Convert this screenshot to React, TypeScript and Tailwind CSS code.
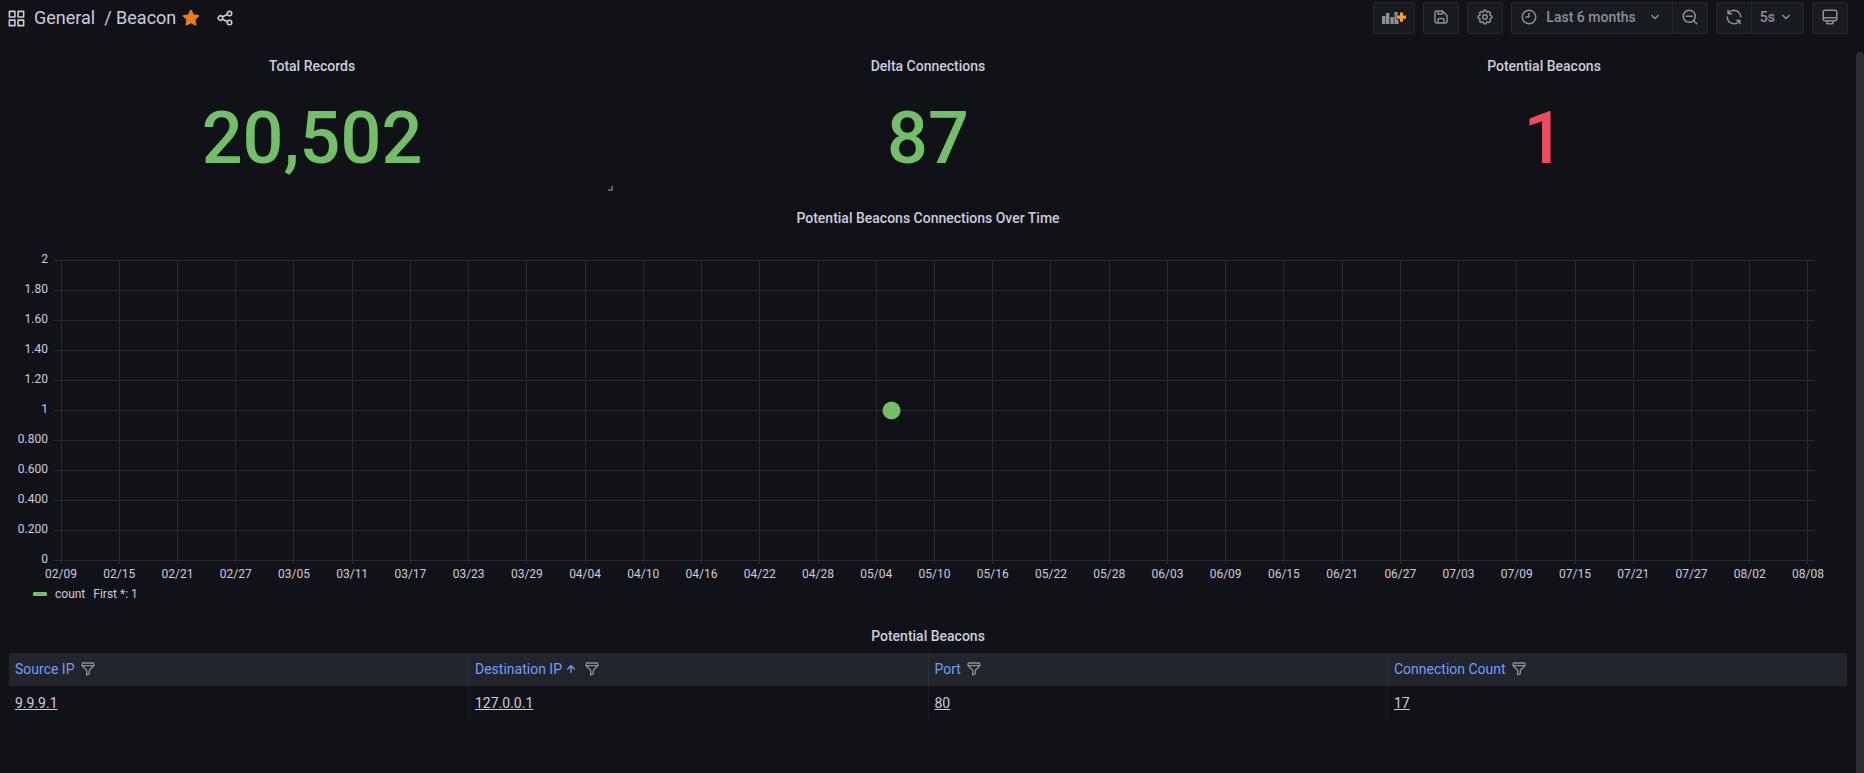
import type { ReactNode } from "react";

const ICONS = {
  apps: "M10,13H3a1,1,0,0,0-1,1v7a1,1,0,0,0,1,1h7a1,1,0,0,0,1-1V14A1,1,0,0,0,10,13ZM9,20H4V15H9ZM21,2H14a1,1,0,0,0-1,1v7a1,1,0,0,0,1,1h7a1,1,0,0,0,1-1V3A1,1,0,0,0,21,2ZM20,9H15V4h5Zm1,4H14a1,1,0,0,0-1,1v7a1,1,0,0,0,1,1h7a1,1,0,0,0,1-1V14A1,1,0,0,0,21,13Zm-1,7H15V15h5ZM10,2H3A1,1,0,0,0,2,3v7a1,1,0,0,0,1,1h7a1,1,0,0,0,1-1V3A1,1,0,0,0,10,2ZM9,9H4V4H9Z",
  star: "M17.56,21a1,1,0,0,1-.46-.11L12,18.22l-5.1,2.67a1,1,0,0,1-1.45-1.06l1-5.63L2.32,10.2a1,1,0,0,1,.55-1.7l5.64-.83,2.51-5.13a1,1,0,0,1,1.8,0l2.54,5.12,5.7.83a1,1,0,0,1,.55,1.71l-4.13,4,1,5.63a1,1,0,0,1-.4,1A1,1,0,0,1,17.56,21Z",
  share: "M18,14a4,4,0,0,0-3.08,1.48l-5.1-2.35a3.64,3.64,0,0,0,0-2.26l5.1-2.35A4,4,0,1,0,14,6a4.17,4.17,0,0,0,.07.71L8.79,9.14a4,4,0,1,0,0,5.72l5.28,2.43A4.17,4.17,0,0,0,14,18a4,4,0,1,0,4-4ZM18,4a2,2,0,1,1-2,2A2,2,0,0,1,18,4ZM6,14a2,2,0,1,1,2-2A2,2,0,0,1,6,14Zm12,6a2,2,0,1,1,2-2A2,2,0,0,1,18,20Z",
  save: "m20.71,9.29-6-6a1,1,0,0,0-.32-.21A1.09,1.09,0,0,0,14,3H6A3,3,0,0,0,3,6V18a3,3,0,0,0,3,3H18a3,3,0,0,0,3-3V10A1,1,0,0,0,20.71,9.29ZM9,5h4V7H9Zm6,14H9V16a1,1,0,0,1,1-1h4a1,1,0,0,1,1,1Zm4-1a1,1,0,0,1-1,1H17V16a3,3,0,0,0-3-3H10a3,3,0,0,0-3,3v3H6a1,1,0,0,1-1-1V6A1,1,0,0,1,6,5H7V8A1,1,0,0,0,8,9h6a1,1,0,0,0,1-1V6.41l4,4Z",
  cog: "M21.32,9.55l-1.89-.63.89-1.78A1,1,0,0,0,20.13,6L18,3.87a1,1,0,0,0-1.15-.19l-1.78.89-.63-1.89A1,1,0,0,0,13.5,2h-3a1,1,0,0,0-.95.68L8.92,4.57,7.14,3.68A1,1,0,0,0,6,3.87L3.87,6a1,1,0,0,0-.19,1.15l.89,1.78-1.89.63A1,1,0,0,0,2,10.5v3a1,1,0,0,0,.68.95l1.89.63-.89,1.78A1,1,0,0,0,3.87,18L6,20.13a1,1,0,0,0,1.15.19l1.78-.89.63,1.89a1,1,0,0,0,.95.68h3a1,1,0,0,0,.95-.68l.63-1.89,1.78.89A1,1,0,0,0,18,20.13L20.13,18a1,1,0,0,0,.19-1.15l-.89-1.78,1.89-.63A1,1,0,0,0,22,13.5v-3A1,1,0,0,0,21.32,9.55ZM20,12.78l-1.2.4A2,2,0,0,0,17.64,16l.57,1.14-1.1,1.1L16,17.64a2,2,0,0,0-2.79,1.16l-.4,1.2H11.22l-.4-1.2A2,2,0,0,0,8,17.64l-1.14.57-1.1-1.1L6.36,16A2,2,0,0,0,5.2,13.18L4,12.78V11.22l1.2-.4A2,2,0,0,0,6.36,8L5.79,6.89l1.1-1.1L8,6.36A2,2,0,0,0,10.82,5.2l.4-1.2h1.56l.4,1.2A2,2,0,0,0,16,6.36l1.14-.57,1.1,1.1L17.64,8a2,2,0,0,0,1.16,2.79l1.2.4ZM12,8a4,4,0,1,0,4,4A4,4,0,0,0,12,8Zm0,6a2,2,0,1,1,2-2A2,2,0,0,1,12,14Z",
  clock: "M12,2A10,10,0,1,0,22,12,10,10,0,0,0,12,2Zm0,18a8,8,0,1,1,8-8A8,8,0,0,1,12,20ZM12,6a1,1,0,0,0-1,1v4H8a1,1,0,0,0,0,2h4a1,1,0,0,0,1-1V7A1,1,0,0,0,12,6Z",
  angleDown: "M17,9.17a1,1,0,0,0-1.41,0L12,12.71,8.46,9.17a1,1,0,0,0-1.41,0,1,1,0,0,0,0,1.42l4.24,4.24a1,1,0,0,0,1.42,0L17,10.59A1,1,0,0,0,17,9.17Z",
  zoomOut: "M21.71,20.29,18,16.61A9,9,0,1,0,16.61,18l3.68,3.68a1,1,0,0,0,1.42,0A1,1,0,0,0,21.71,20.29ZM11,18a7,7,0,1,1,7-7A7,7,0,0,1,11,18Zm4-8H7a1,1,0,0,0,0,2h8a1,1,0,0,0,0-2Z",
  sync: "M19.91,15.51H15.38a1,1,0,0,0,0,2h2.4A8,8,0,0,1,4,12a1,1,0,1,0-2,0,10,10,0,0,0,16.88,7.23V21a1,1,0,0,0,2,0V16.5A1,1,0,0,0,19.91,15.51ZM12,2A10,10,0,0,0,5.12,4.77V3a1,1,0,0,0-2,0V7.5a1,1,0,0,0,1,1h4.5a1,1,0,0,0,0-2H6.22A8,8,0,0,1,20,12a1,1,0,0,0,2,0A10,10,0,0,0,12,2Z",
  monitor: "M19,2H5A3,3,0,0,0,2,5V15a3,3,0,0,0,3,3H7.64l-.58,1a2,2,0,0,0,0,2,2,2,0,0,0,1.75,1h6.46A2,2,0,0,0,17,21a2,2,0,0,0,0-2l-.59-1H19a3,3,0,0,0,3-3V5A3,3,0,0,0,19,2ZM8.77,20,10,18H14l1.2,2ZM20,15a1,1,0,0,1-1,1H5a1,1,0,0,1-1-1V14H20Zm0-3H4V5A1,1,0,0,1,5,4H19a1,1,0,0,1,1,1Z",
  filter: "M19,2H5A3,3,0,0,0,2,5V6.17a3,3,0,0,0,.25,1.2l0,.06a2.81,2.81,0,0,0,.59.86L9,14.41V21a1,1,0,0,0,.47.85A1,1,0,0,0,10,22a1,1,0,0,0,.45-.11l4-2A1,1,0,0,0,15,19V14.41l6.12-6.12a2.81,2.81,0,0,0,.59-.86l0-.06A3,3,0,0,0,22,6.17V5A3,3,0,0,0,19,2ZM13.29,13.29A1,1,0,0,0,13,14v4.38l-2,1V14a1,1,0,0,0-.29-.71L5.41,8H18.59ZM20,6H4V5A1,1,0,0,1,5,4H19a1,1,0,0,1,1,1Z",
  arrowUp: "M17.71,11.29l-5-5a1,1,0,0,0-.33-.21,1,1,0,0,0-.76,0,1,1,0,0,0-.33.21l-5,5a1,1,0,0,0,1.42,1.42L11,9.41V17a1,1,0,0,0,2,0V9.41l3.29,3.3a1,1,0,0,0,1.42,0A1,1,0,0,0,17.71,11.29Z",
};

function Icon({ name, className = "size-[18px]" }: { name: keyof typeof ICONS; className?: string }) {
  return (
    <svg viewBox="0 0 24 24" fill="currentColor" aria-hidden="true" className={`shrink-0 ${className}`}>
      <path d={ICONS[name]} />
    </svg>
  );
}

function AddPanelIcon() {
  return (
    <svg viewBox="0 0 24 14" aria-hidden="true" className="h-3.5 w-6 shrink-0">
      <path
        fill="currentColor"
        d="M0 6h3.4v8H0zM3.9 3h3.5v11H3.9zM8.4 7h3.4v7H8.4zM12.4 2h3.2v3.2h-1v4.6h2V14h-4.2z"
      />
      <path fill="#f9a02c" d="M18 2.6h3v3h3v3.2h-3v3h-3v-3h-3V5.6h3z" />
    </svg>
  );
}

function ToolButton({
  label,
  className = "w-9 rounded-xs",
  children,
}: {
  label: string;
  className?: string;
  children: ReactNode;
}) {
  return (
    <button
      type="button"
      aria-label={label}
      className={`flex h-8 items-center justify-center border border-[#26282d] bg-[#181b1f] pb-0.5 text-sm font-medium ${className}`}
    >
      {children}
    </button>
  );
}

function Toolbar() {
  return (
    <header className="flex h-[52px] items-start justify-between pt-0.5 pr-4 pl-[7px]">
      <div className="flex h-8 items-center">
        <Icon name="apps" className="size-[19px]" />
        <nav aria-label="Breadcrumb" className="ml-2 flex gap-[9px] text-lg">
          <a href="#general">General</a>
          <a href="#beacon">/ Beacon</a>
        </nav>
        <button type="button" aria-label="Unmark as favorite" className="ml-[5px] text-[#eb7b18]">
          <Icon name="star" className="size-5" />
        </button>
        <button type="button" aria-label="Share dashboard" className="ml-[15px]">
          <Icon name="share" />
        </button>
      </div>
      <div className="flex gap-2 text-[#8e8e99]">
        <ToolButton label="Add panel" className="w-[42px] rounded-xs">
          <AddPanelIcon />
        </ToolButton>
        <ToolButton label="Save dashboard">
          <Icon name="save" />
        </ToolButton>
        <ToolButton label="Dashboard settings">
          <Icon name="cog" />
        </ToolButton>
        <div className="flex">
          <ToolButton label="Last 6 months" className="rounded-l-xs px-2">
            <Icon name="clock" />
            <span className="mr-2.5 ml-2">Last 6 months</span>
            <Icon name="angleDown" />
          </ToolButton>
          <ToolButton label="Zoom out time range" className="-ml-px w-9 rounded-r-xs">
            <Icon name="zoomOut" />
          </ToolButton>
        </div>
        <div className="flex">
          <ToolButton label="Refresh dashboard" className="w-9 rounded-l-xs">
            <Icon name="sync" />
          </ToolButton>
          <ToolButton label="Refresh interval 5s" className="-ml-px gap-0.5 rounded-r-xs px-2">
            <span>5s</span>
            <Icon name="angleDown" />
          </ToolButton>
        </div>
        <ToolButton label="Cycle view mode">
          <Icon name="monitor" />
        </ToolButton>
      </div>
    </header>
  );
}

function Panel({ title, className = "", children }: { title: string; className?: string; children: ReactNode }) {
  return (
    <section className={`relative flex flex-col ${className}`}>
      <h2 className="text-center text-sm leading-7 font-medium">{title}</h2>
      {children}
    </section>
  );
}

const STATS = [
  { title: "Total Records", value: "20,502", color: "text-[#73bf69]", resizable: true },
  { title: "Delta Connections", value: "87", color: "text-[#73bf69]", resizable: false },
  { title: "Potential Beacons", value: "1", color: "text-[#f2495c]", resizable: false },
];

const Y_LABELS = ["2", "1.80", "1.60", "1.40", "1.20", "1", "0.800", "0.600", "0.400", "0.200", "0"];
const X_LABELS = [
  "02/09", "02/15", "02/21", "02/27", "03/05", "03/11", "03/17", "03/23", "03/29", "04/04", "04/10",
  "04/16", "04/22", "04/28", "05/04", "05/10", "05/16", "05/22", "05/28", "06/03", "06/09", "06/15",
  "06/21", "06/27", "07/03", "07/09", "07/15", "07/21", "07/27", "08/02", "08/08",
];
const ROW = 30;
const TICK = 3.32;

function TimeChart() {
  const height = (Y_LABELS.length - 1) * ROW;
  return (
    <div className="pt-7 pr-[33px] pl-[53px]">
      <svg
        role="img"
        aria-label="Connection count over time"
        className="block h-[324px] w-full overflow-visible text-xs"
        fill="#ccccdc"
      >
        <g stroke="#28292e" shapeRendering="crispEdges">
          {Y_LABELS.map((label, i) => (
            <line key={label} x1="-7" x2="100%" y1={i * ROW + 0.5} y2={i * ROW + 0.5} />
          ))}
          {X_LABELS.map((label, i) => (
            <line key={label} x1={`${i * TICK}%`} x2={`${i * TICK}%`} y1="0" y2={height + 4} />
          ))}
        </g>
        <g textAnchor="end">
          {Y_LABELS.map((label, i) => (
            <text key={label} x="-13" y={i * ROW + 3}>
              {label}
            </text>
          ))}
        </g>
        <g textAnchor="middle">
          {X_LABELS.map((label, i) => (
            <text key={label} x={`${i * TICK}%`} y={height + 18}>
              {label}
            </text>
          ))}
        </g>
        <circle cx="47.35%" cy={height / 2 + 0.5} r="9" fill="#73bf69" />
      </svg>
    </div>
  );
}

const COLUMNS = ["Source IP", "Destination IP", "Port", "Connection Count"];
const RECORDS = [["9.9.9.1", "127.0.0.1", "80", "17"]];

function BeaconTable() {
  return (
    <div className="px-px pt-[3px]">
      <table className="w-full table-fixed border-collapse text-left text-sm">
        <thead>
          <tr className="h-[33px] bg-[#22252b] text-[#6e9fff]">
            {COLUMNS.map((name) => (
              <th key={name} scope="col" className="border-r border-[#2d3036] px-1.5 pt-0 pb-0.5 font-normal last:border-r-0">
                <div className="flex items-center">
                  <button type="button" className="flex items-center">
                    {name}
                    {name === "Destination IP" && <Icon name="arrowUp" className="ml-px size-4" />}
                  </button>
                  <button type="button" aria-label={`Filter ${name}`} className="ml-[5px] text-[#8e8e99]">
                    <Icon name="filter" className="size-4" />
                  </button>
                </div>
              </th>
            ))}
          </tr>
        </thead>
        <tbody>
          {RECORDS.map((row) => (
            <tr key={row[0]} className="h-[35px]">
              {row.map((cell) => (
                <td key={cell} className="border-r border-[#1e1f24] px-1.5 pt-0 pb-0.5 last:border-r-0">
                  <a href="#record" className="underline">
                    {cell}
                  </a>
                </td>
              ))}
            </tr>
          ))}
        </tbody>
      </table>
    </div>
  );
}

export default function App() {
  return (
    <div className="flex min-h-screen flex-col bg-[#111217] font-['Roboto',sans-serif] text-[#ccccdc]">
      <Toolbar />
      <div className="flex flex-1">
        <main className="flex min-w-0 flex-1 flex-col gap-2 px-2">
          <div className="grid grid-cols-3 gap-2">
            {STATS.map((stat) => (
              <Panel key={stat.title} title={stat.title} className="h-36">
                <p
                  className={`flex flex-1 items-center justify-center pt-0.5 text-7xl leading-none font-medium ${stat.color}`}
                >
                  {stat.value}
                </p>
                {stat.resizable && (
                  <span className="absolute right-[3px] bottom-[5px] size-[5px] border-r-2 border-b-2 border-[#5a5b60]" />
                )}
              </Panel>
            ))}
          </div>
          <Panel title="Potential Beacons Connections Over Time" className="h-[410px]">
            <TimeChart />
            <div className="flex items-center gap-2 pl-[25px] text-xs leading-5">
              <span className="h-1 w-3.5 rounded-[1px] bg-[#73bf69]" />
              <span>count</span>
              <span>First *: 1</span>
            </div>
          </Panel>
          <Panel title="Potential Beacons">
            <BeaconTable />
          </Panel>
        </main>
        <div className="w-2 rounded-t-sm bg-[#2c2d32]" />
      </div>
    </div>
  );
}
